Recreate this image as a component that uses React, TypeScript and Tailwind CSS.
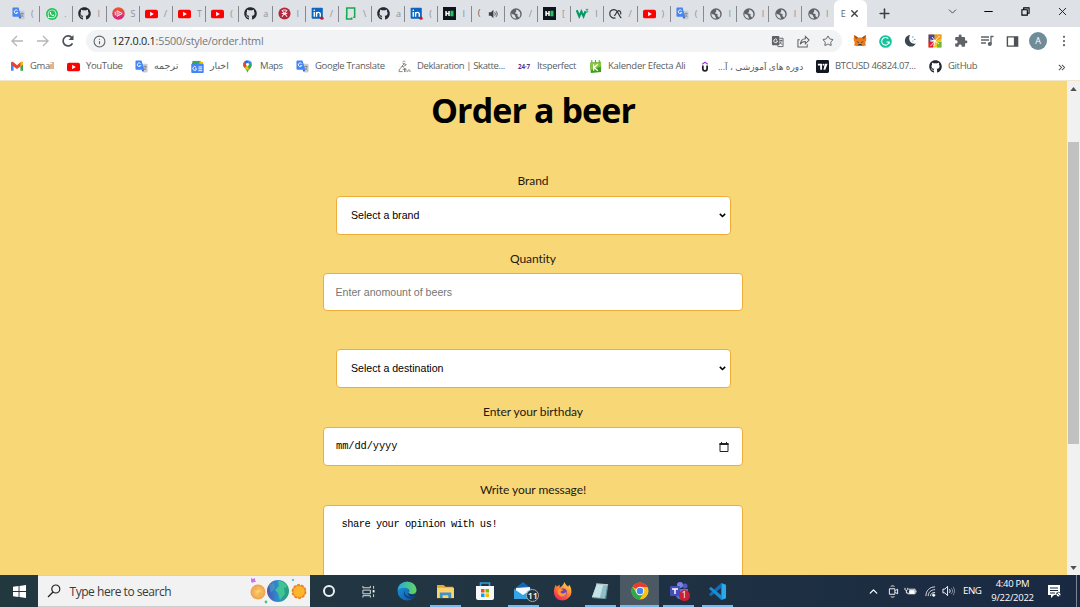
import type { ReactNode } from "react";
import { FaGithub, FaWhatsapp } from "react-icons/fa";
import { MdExtension } from "react-icons/md";
import { ChevronDown, ChevronUp, Minus, Plus, X, Star, Info } from "lucide-react";

const Translate = () => (
  <svg viewBox="0 0 14 14" className="size-[13px]">
    <path d="M6 4h6.5a1 1 0 0 1 1 1v7.5a1 1 0 0 1-1 1H9z" fill="#c9cdd2" />
    <path d="M1.5.5h5.500l3 10h-8.500a1 1 0 0 1-1-1v-8a1 1 0 0 1 1-1z" fill="#4285f4" />
    <path d="M6 3.800A2 2 0 1 0 6.300 6H4.600" fill="none" stroke="#fff" strokeWidth="1" />
    <path d="M9 7h3.500M10.800 6v1M12 7c-.5 2-1.500 3-2.500 4M9.800 8l2.500 3" fill="none" stroke="#7b828c" strokeWidth=".8" />
    <path d="M7 10.500h3L8.500 13z" fill="#2a56c6" />
  </svg>
);
const YouTube = () => (
  <svg viewBox="0 0 14 10" className="h-[10px] w-[13px]">
    <rect y=".3" width="14" height="9.400" rx="2" fill="#f00" />
    <path d="M5.500 2.700v4.600L9.500 5z" fill="#fff" />
  </svg>
);
const GitHub = () => <FaGithub className="size-[13px] text-[#24292f]" />;
const Globe = () => (
  <svg viewBox="0 0 14 14" className="size-[12px]">
    <circle cx="7" cy="7" r="6.700" fill="#5f6368" />
    <path d="M7.500 1.800c-1 2 .5 2.700-1 3.200-1 .5-.5 1.500.5 1.700 2-.2 2.500 1 1.500 2.500 1.500.5 1 1.500 2.500 1.800 2-3 1.500-7.500-3.500-9.200zM1.700 6.300c1.500 1.500 3.800 1 4.300 2.700 0 1.500 1 1.300 1 3.300-3 0-5.600-2.300-5.300-6z" fill="#dee1e6" />
  </svg>
);
const WhatsApp = () => (
  <span className="flex size-[12px] items-center justify-center rounded-full bg-[#25c25c]">
    <FaWhatsapp className="size-[10px] text-white" />
  </span>
);
const LinkedIn = () => (
  <svg viewBox="0 0 14 14" className="size-[13px]">
    <rect x=".7" y=".7" width="12" height="12" rx="1" fill="#0a66c2" />
    <path d="M3.500 5.500v5M6 10.500v-5M6 8c0-3 4-3 4 0v2.500" fill="none" stroke="#fff" strokeWidth="1.500" />
    <circle cx="3.500" cy="3.500" r=".9" fill="#fff" />
    <circle cx="11.800" cy="12" r="1.800" fill="#c5192d" />
  </svg>
);
const Hacker = () => (
  <svg viewBox="0 0 14 14" className="size-[13px]">
    <rect width="14" height="14" fill="#0e141e" />
    <path d="M3.300 4.300v5.400M6.500 4.300v5.400M3.500 7h3" stroke="#fff" strokeWidth="1.600" />
    <rect x="8" y="4" width="3.300" height="6" fill="#1fc55b" />
  </svg>
);
const Playdisc = () => (
  <svg viewBox="0 0 14 14" className="size-[13px]">
    <defs>
      <linearGradient id="disc" x1="0" y1="0" x2="0" y2="1">
        <stop stopColor="#f0592b" />
        <stop offset="1" stopColor="#d61f83" />
      </linearGradient>
    </defs>
    <circle cx="7" cy="7" r="6.700" fill="url(#disc)" />
    <path d="M3.500 5v4M5.500 4l5.500 3-5.500 3zM7.500 5.500v3" fill="none" stroke="#fff" strokeWidth=".9" />
  </svg>
);
const RedDisc = () => (
  <svg viewBox="0 0 14 14" className="size-[13px]">
    <circle cx="7" cy="7" r="6.500" fill="#b3263b" />
    <path d="m4.200 3.500 5.600 7M9.800 3.500l-5.600 7M5 3.200h4M4 7h6" fill="none" stroke="#f8e9eb" strokeWidth="1.200" />
  </svg>
);
const GreenDoc = () => (
  <svg viewBox="0 0 14 14" className="size-[13px]">
    <path d="M3 10V1.200h8.500v9.800H10M2.800 9v3.800h5.500v-1.500" fill="none" stroke="#14a94c" strokeWidth="1.600" />
  </svg>
);
const W3 = () => (
  <svg viewBox="0 0 14 14" className="size-[13px]">
    <path d="M.8 3.500 3.500 10l2.300-5 2.300 5 2.200-5.500" fill="none" stroke="#059862" strokeWidth="2.300" />
    <path d="M10.500 2.500h2.300l-1.200 1.400c1.800 0 1.500 2.400-.8 1.800" fill="none" stroke="#059862" strokeWidth=".9" />
  </svg>
);
const Loop = () => (
  <svg viewBox="0 0 14 14" className="size-[13px]" fill="none" stroke="#33373b" strokeWidth="1.300">
    <path d="M7 11.500C4 13 .8 10.500.8 7S4.500 2 7.500 3.500c2.500 1.500 3 6 5.700 8.500" />
    <path d="M5.500 9.500C8 8 8 4 10.500 3.800c2 .2 2.500 2.700 2 4.200" />
  </svg>
);
const Speaker = () => (
  <svg viewBox="0 0 12 12" className="size-[10px]">
    <path d="M1 4h2.500L6.500 1v10l-3-3H1z" fill="#3c4043" />
    <path d="M8 4c1 1 1 3 0 4M9.500 2.500c2 2 2 5 0 7" fill="none" stroke="#3c4043" />
  </svg>
);

const tabs: [ReactNode, string][] = [
  [<Translate />, "("], [<WhatsApp />, "."], [<GitHub />, "I"], [<Playdisc />, "S"], [<YouTube />, "/"],
  [<YouTube />, "T"], [<YouTube />, "("], [<GitHub />, "a"], [<RedDisc />, "I"], [<LinkedIn />, "/"],
  [<GreenDoc />, "\\"], [<GitHub />, "a"], [<LinkedIn />, "("], [<Hacker />, "I"], [null, ""],
  [<Globe />, "/"], [<Hacker />, "["], [<W3 />, "I"], [<Loop />, "/"], [<YouTube />, ")"], [<Translate />, "("],
  [<Globe />, "I"], [<Globe />, "I"], [<Globe />, "I"], [<Globe />, "I"],
];

function TabStrip() {
  return (
    <div className="flex h-[27px] bg-[#dee1e6] pl-[7px]">
      {tabs.map(([icon, letter], i) => (
        <div key={i} className={`flex h-[27px] shrink-0 items-center ${i < 22 ? "w-[33.2px]" : "w-[32.200px]"}`}>
          {icon ? (
            <>
              <span className={`flex w-[14px] justify-center ${i > 20 ? "ml-[5px]" : "ml-[4.500px]"}`}>{icon}</span>
              <span className="ml-[5.500px] text-[9px] text-[#8f9296]">{letter}</span>
            </>
          ) : (
            <>
              <span className="ml-[6px] text-[9.5px] text-[#5f6368]">(</span>
              <span className="ml-[8px]"><Speaker /></span>
            </>
          )}
          {i < 24 && <span className="ml-auto h-[16px] w-px bg-[#868a8f]" />}
        </div>
      ))}
      <div className="flex w-[33.500px] shrink-0 items-center rounded-t-[6px] bg-white pl-[7px]">
        <span className="text-[9px] text-[#66696d]">E</span>
        <X className="ml-[3px] size-[11px] text-[#3c4043]" strokeWidth={3} />
      </div>
      <Plus className="mt-[6px] ml-[10px] size-[15px] text-[#3c4043]" strokeWidth={2.500} />
      <ChevronDown className="mt-[5px] ml-[54px] size-[13px] text-[#4a4d51]" strokeWidth={1.800} />
      <Minus className="mt-[5px] ml-[23px] size-[13px] text-black" strokeWidth={2} />
      <svg viewBox="0 0 10 10" className="mt-[7px] ml-[26px] size-[9px]" fill="none" stroke="#000" strokeWidth="1.200">
        <path d="M1 3h6v6H1zM3 3V1h6v6H7" />
      </svg>
      <X className="mt-[5px] ml-[26px] size-[13px] text-[#222]" strokeWidth={1.800} />
    </div>
  );
}

function Toolbar() {
  return (
    <div className="flex h-[27px] items-center pt-[1px]">
      <svg viewBox="0 0 60 14" className="ml-[10px] h-[14px] w-[60px]" fill="none" strokeWidth="1.400">
        <path d="M13 7H2.500M7 2 2 7l5 5M27 7h10.500M33 2l5 5-5 5" stroke="#b5b7ba" />
      </svg>
      <svg viewBox="0 0 14 14" className="-ml-[9px] size-[14px]" fill="none" stroke="#4d5156" strokeWidth="1.700">
        <path d="M11.500 9.300A5 5 0 1 1 11 3.800" />
        <path d="M12.500 1v5h-5z" fill="#4d5156" stroke="none" />
      </svg>
      <div className="ml-[11px] flex h-[22px] w-[756px] items-center rounded-full bg-[#f1f3f4] pl-[7px]">
        <Info className="size-[13px] text-[#5f6368]" strokeWidth={2} />
        <span className="ml-[6px] text-[10.800px] tracking-[-0.220px] text-[#75787c]">
          <span className="text-[#202124]">127.0.0.1</span>:5500/style/order.html
        </span>
        <svg viewBox="0 0 14 14" className="mr-[13px] ml-auto size-[13px]">
          <rect x="1" y="1" width="8" height="10" rx="1" fill="#5f6368" />
          <path d="M6.500 5A2 2 0 1 0 7 6.500H5.200" fill="none" stroke="#f1f3f4" />
          <path d="M9 3.500h4v9H7.500L7 11M9 6h3.500M11 5v1c0 2-1 3-2 4M9.500 7.500l2.500 3" fill="none" stroke="#5f6368" />
        </svg>
        <svg viewBox="0 0 14 14" className="mr-[12px] size-[13px]" fill="none" stroke="#5f6368" strokeWidth="1.100">
          <path d="M3 5H1v8h10v-3M9 1.500 13 5.500l-4 4V7C6 7 4.500 8 3.500 10 4 6.500 6 4 9 4z" />
        </svg>
        <Star className="mr-[8px] size-[12px] text-[#5f6368]" strokeWidth={2} />
      </div>
      <svg viewBox="0 0 14 14" className="ml-[11px] size-[14px]">
        <path d="m1 1 4 2.500h4L13 1l.3 5-1 2.500.5 3-3 .8L8 11.500H6l-1.800.8-3-.8.5-3-1-2.500z" fill="#ea7e1e" />
        <path d="m1 1 4 2.500L3 5.500zM13 1 9 3.500l2 2z" fill="#a94d18" />
        <path d="m3 7.500 2.500.3.5 1.200zM11 7.500l-2.500.3L8 9zM5.500 10h3l.4 1.500H5z" fill="#363636" />
      </svg>
      <svg viewBox="0 0 14 14" className="ml-[12px] size-[13px]">
        <circle cx="7" cy="7" r="6.800" fill="#15c39a" />
        <path d="M10 4A4.100 4.100 0 1 0 11 7.500H8M11 7.500v2" fill="none" stroke="#fff" strokeWidth="1.200" />
      </svg>
      <svg viewBox="0 0 14 14" className="ml-[11px] size-[14px]">
        <path d="M7 1a5.800 5.800 0 1 0 5.800 8.500C8 11 4.500 6 7 1z" fill="#3c4650" />
        <path d="M9 3h1.500M11 5.500h1.500M9.500 7h1" stroke="#4aa5d8" />
      </svg>
      <svg viewBox="0 0 14 14" className="ml-[11px] size-[14px]">
        <path d="M.5.500h13v13H.5z" fill="#f4c51c" />
        <path d="M.5.500h6v5l-6 3z" fill="#4f4596" />
        <path d="M7 .5h6.500v4L7 7z" fill="#ed9a29" />
        <path d="M.5 8h5.500l-1 5.500H.5z" fill="#dc2140" />
        <path d="M9 8h4.500v5.500H9z" fill="#76b73a" />
        <path d="m2.500 12 9-10M4 3l3 4 4 3M7 7l-1 5M2 6l5 1" stroke="#fff" fill="none" strokeWidth=".9" />
      </svg>
      <MdExtension className="ml-[12px] size-[14px] text-[#5f6368]" />
      <svg viewBox="0 0 14 14" className="ml-[12px] size-[14px]" fill="none" stroke="#5f6368" strokeWidth="1.300">
        <path d="M1 3h8M1 6h8M1 9h5M11 10V2.500h2.500" />
        <circle cx="9.800" cy="10" r="1.400" fill="#5f6368" />
      </svg>
      <svg viewBox="0 0 14 14" className="ml-[12px] size-[13px]">
        <path d="M1.500 2h11v10h-11z" fill="none" stroke="#4d5156" strokeWidth="1.500" />
        <path d="M8.500 2h4v10h-4z" fill="#4d5156" />
      </svg>
      <span className="ml-[10px] flex size-[18px] items-center justify-center rounded-full bg-[#718c99] text-[9px] text-white">A</span>
      <svg viewBox="0 0 4 14" className="ml-[15px] h-[13px] w-[4px]" fill="#5f6368">
        <circle cx="2" cy="2" r="1.200" /><circle cx="2" cy="6.500" r="1.200" /><circle cx="2" cy="11" r="1.200" />
      </svg>
    </div>
  );
}

function Bookmark({ icon, text, box, spacing = "tracking-[-0.150px]" }: { icon: ReactNode; text: string; box: string; spacing?: string }) {
  return (
    <div className={`flex shrink-0 items-center ${box}`}>
      <span className="flex w-[14px] shrink-0 justify-center">{icon}</span>
      <span className={`ml-[6px] text-[9.500px] whitespace-nowrap text-[#5a5d61] ${spacing}`}>{text}</span>
    </div>
  );
}

function Bookmarks() {
  return (
    <div className="flex h-[27px] items-center border-b border-[#f0e6cc] pb-px pl-[10px]">
      <Bookmark box="w-[56px]" text="Gmail" spacing="tracking-[-0.400px]" icon={
        <svg viewBox="0 0 14 12" className="h-[11px] w-[12px]">
          <path d="M0 2v9h3V5z" fill="#4285f4" />
          <path d="M14 2v9h-3V5z" fill="#34a853" />
          <path d="M0 2c0-2 2-2 3-1l4 3.500L11 1c1-1 3-1 3 1v2L7 9 0 4z" fill="#ea4335" />
          <path d="M11 1c1-1 3-1 3 1v2l-3 2z" fill="#fbbc04" />
        </svg>} />
      <Bookmark box="w-[68px]" text="YouTube" spacing="tracking-[-0.350px]" icon={<YouTube />} />
      <Bookmark box="w-[56px]" text="ترجمه" spacing="tracking-normal" icon={<Translate />} />
      <Bookmark box="w-[50px]" text="اخبار" spacing="tracking-normal" icon={
        <svg viewBox="0 0 14 14" className="size-[13px]">
          <path d="M1 3h12v5H1z" fill="#d93b30" /><path d="M1.500 1h9v5h-9z" fill="#34a853" /><path d="M9 2h4v4H9z" fill="#fbbc04" />
          <rect x=".3" y="4" width="13.400" height="10" rx="1" fill="#4285f4" />
          <path d="M5.500 7.800a2 2 0 1 0 .5 1.700H4.500M8 7.500h4M8 9.500h4M8 11.500h4" fill="none" stroke="#fff" />
        </svg>} />
      <Bookmark box="w-[55px]" text="Maps" spacing="tracking-[-0.400px]" icon={
        <svg viewBox="0 0 14 14" className="size-[13px]">
          <path d="M7 14C6.500 10 2.500 8.500 2.500 5h9C11.500 8.500 7.500 10 7 14z" fill="#34a853" />
          <path d="M2.500 5A4.500 4.500 0 0 1 7 .3L9 4 3.500 8z" fill="#1a73e8" />
          <path d="M3.300 2.200 7 5 4 8.500C2 6 2 4 3.300 2.200z" fill="#ea4335" />
          <path d="m4 8.500 3-3.500 4 3-2 2.300-3 .5z" fill="#fbbc04" />
          <path d="m7 5 4-3c1 2 .8 4-.5 6l-2 2z" fill="#34a853" />
          <path d="M7 .3c2 0 3.500 1 4.200 2.500L9 6z" fill="#4285f4" />
          <circle cx="7" cy="4.800" r="1.600" fill="#fff" />
        </svg>} />
      <Bookmark box="w-[102px]" text="Google Translate" spacing="tracking-[-0.320px]" icon={<Translate />} />
      <Bookmark box="w-[120px]" text="Deklaration | Skatte..." spacing="tracking-[-0.380px]" icon={
        <svg viewBox="0 0 14 14" className="size-[13px]" fill="none" stroke="#77756d" strokeWidth=".9">
          <path d="M5 2c1-1 2-1 3 0M5 3.500l4 1.500-3 2H4l3-3.500M4 7c-1 2-3 3-3 5.500h4M6 8l2 2H5M7 13V9.500h1.500V13M10.500 13c0-3.500 2.500-3.500 2.500 0" />
        </svg>} />
      <Bookmark box="w-[71px]" text="Itsperfect" spacing="tracking-[-0.300px]" icon={<b className="text-[6.300px] tracking-[-0.200px] text-[#62317c]">24·7</b>} />
      <Bookmark box="w-[110px]" text="Kalender Efecta Ali" spacing="tracking-[-0.260px]" icon={
        <svg viewBox="0 0 14 14" className="size-[13px]">
          <path d="m1 3 12-1v11L2 14z" fill="#3f9b1d" /><path d="m1 3 12-1v5L1.500 11z" fill="#86c740" />
          <path d="M3 0v3M7 0v3M11 0v3" stroke="#6a8a3f" />
          <path d="M5 4.500v7M9.500 4.500 5.500 8l4 3.500" fill="none" stroke="#fff" strokeWidth="1.400" />
        </svg>} />
      <div className="flex w-[117px] shrink-0 items-center">
        <svg viewBox="0 0 14 14" className="size-[13px]" fill="none">
          <path d="m4.500 4.500 3-2 3 2" stroke="#a435f0" strokeWidth="1.300" />
          <path d="M5.200 6v3.500c0 3 4.600 3 4.600 0V6" stroke="#222" strokeWidth="1.900" />
        </svg>
        <span dir="rtl" className="ml-[7px] text-[9px] tracking-[-0.200px] whitespace-nowrap text-[#5a5d61]">دوره های آموزشی ، آ...</span>
      </div>
      <Bookmark box="w-[113px]" text="BTCUSD 46824.07..." spacing="tracking-[-0.350px]" icon={
        <svg viewBox="0 0 14 14" className="size-[13px]">
          <rect width="14" height="14" rx="1.500" fill="#131722" />
          <path d="M2 4h4.500v6.500h-2V6H2zM9.500 4h3L10 10.500H8z" fill="#fff" /><circle cx="8" cy="5" r="1" fill="#fff" />
        </svg>} />
      <Bookmark box="w-[129px]" text="GitHub" spacing="tracking-[-0.350px]" icon={<GitHub />} />
      <svg viewBox="0 0 8 8" className="mt-px ml-[1px] size-[7px]" fill="none" stroke="#4d5156" strokeWidth="1.200"><path d="m1 1 3 3-3 3M4.500 1l3 3-3 3" /></svg>
    </div>
  );
}

const field = "shrink-0 rounded-[4px] border border-[#f0ad38] bg-white";
const caption = "h-[18px] shrink-0 font-[Lato,sans-serif] text-[12px] leading-[18px] tracking-[-0.070px] text-[#1d1a10]";
const arrow = (
  <svg viewBox="0 0 8 6" className="h-[5px] w-[7px]" fill="none" stroke="#000" strokeWidth="1.900"><path d="m.8 1 3.200 3.200L7.200 1" /></svg>
);

function Dropdown({ text, margin }: { text: string; margin: string }) {
  return (
    <div className={`flex h-[39px] w-[395px] items-center justify-between pr-[3.500px] pl-[14.500px] font-['Liberation_Sans',sans-serif] text-[10.600px] text-black ${field} ${margin}`}>
      <span>{text}</span>
      {arrow}
    </div>
  );
}

function Page() {
  return (
    <div className="flex h-[494px] overflow-hidden bg-[#f8d777]">
      <div className="flex w-[1067px] flex-col items-center pr-px">
        <h1 className="mt-[7px] h-[44px] shrink-0 text-[34px] leading-[44px] font-bold tracking-[-0.900px] text-black">Order a beer</h1>
        <label className={`mt-[40px] ${caption}`}>Brand</label>
        <Dropdown text="Select a brand" margin="mt-[6px]" />
        <label className={`mt-[15px] ${caption}`}>Quantity</label>
        <input placeholder="Enter anomount of beers" className={`mt-[5px] h-[38px] w-[420px] px-[11.500px] font-['Liberation_Sans',sans-serif] text-[10.600px] placeholder:text-[#757575] ${field}`} />
        <Dropdown text="Select a destination" margin="mt-[38px]" />
        <label className={`mt-[15px] ${caption}`}>Enter your birthday</label>
        <div className={`mt-[6px] flex h-[39px] w-[420px] items-center justify-between pr-[13.500px] pl-[12px] ${field}`}>
          <span className="font-['Liberation_Mono',monospace] text-[10.400px] tracking-[-0.100px] text-black">mm/dd/yyyy</span>
          <svg viewBox="0 0 10 10" className="size-[10px]">
            <path d="M1 1.500h8v8H1z" fill="none" stroke="#222" /><path d="M.5 1h9v2h-9z" fill="#222" /><path d="M2 0h1v2H2zM7 0h1v2H7z" fill="#222" />
          </svg>
        </div>
        <label className={`mt-[15px] ${caption}`}>Write your message!</label>
        <textarea defaultValue="share your opinion with us!" className={`mt-[6px] h-[120px] w-[420px] resize-none px-[17.500px] py-[11px] font-['Liberation_Mono',monospace] text-[10.400px] tracking-[-0.470px] text-black ${field}`} />
      </div>
      <div className="flex w-[13px] flex-col items-center bg-[#f1f1f1]">
        <svg viewBox="0 0 8 5" className="mt-[6px] h-[4px] w-[7px]"><path d="M0 5 4 0l4 5z" fill="#505050" /></svg>
        <div className="mt-[51px] h-[302px] w-[11px] bg-[#c1c1c1]" />
        <svg viewBox="0 0 8 5" className="mt-auto mb-[5px] h-[4px] w-[7px]"><path d="M0 0h8L4 5z" fill="#505050" /></svg>
      </div>
    </div>
  );
}

function Slot({ children, running, active }: { children: ReactNode; running?: boolean; active?: boolean }) {
  return (
    <div className={`flex h-[32px] w-[38.800px] shrink-0 flex-col items-center ${active ? "bg-[#4b5964]" : ""}`}>
      <div className="flex h-[30px] items-center pt-[2px]">{children}</div>
      {running && <div className={`h-[2px] bg-[#76b9ed] ${active ? "w-full" : "w-[31px]"}`} />}
    </div>
  );
}

function Taskbar() {
  return (
    <div className="flex h-[32px] bg-linear-to-r from-[#22383f] via-[#203442] to-[#1a2942] text-white">
      <div className="flex w-[38px] shrink-0 items-center justify-center">
        <svg viewBox="0 0 14 14" className="size-[13px]" fill="#fff"><path d="M0 2l6-.9v5.400H0zM7 1l7-1v6.500H7zM0 7.500h6v5.400L0 12zM7 7.500h7V14l-7-1z" /></svg>
      </div>
      <div className="flex w-[272px] shrink-0 items-center border-y border-[#cfcfcf] bg-[#f2f2f2]">
        <svg viewBox="0 0 14 14" className="ml-[9px] size-[14px]" fill="none" stroke="#222" strokeWidth="1.200"><circle cx="8.800" cy="5" r="4" /><path d="M6 8 1 13" /></svg>
        <span className="ml-[8.500px] pt-px text-[12px] tracking-[-0.460px] whitespace-nowrap text-[#3a3a3a]">Type here to search</span>
        <svg viewBox="0 0 60 28" className="mr-[1px] ml-auto h-[28px] w-[60px]">
          <defs>
            <radialGradient id="moon"><stop stopColor="#ffd66e" /><stop offset="1" stopColor="#ee9e4e" /></radialGradient>
            <linearGradient id="earth"><stop stopColor="#4d52ad" /><stop offset=".5" stopColor="#2c8fd3" /><stop offset="1" stopColor="#24a66c" /></linearGradient>
          </defs>
          <circle cx="9" cy="15" r="7.500" fill="url(#moon)" />
          <circle cx="7" cy="12" r="1.500" fill="#f0b258" /><circle cx="11" cy="17" r="1.800" fill="#f0b258" />
          <circle cx="29" cy="14" r="11" fill="url(#earth)" />
          <path d="M29 4c5 0 8 3 9 6l-3 1 1 6-5 6-2-7-3-3 4-4z" fill="#45cf88" opacity=".8" /><path d="m20 8 5-3 1 6-4 5z" fill="#4aafc4" opacity=".5" />
          <circle cx="50" cy="14.500" r="6.800" fill="#f59a26" />
          <circle cx="50" cy="14.500" r="6.700" fill="none" stroke="#ee791f" strokeWidth="1.400" strokeDasharray="2.800 1.400" />
          <circle cx="50" cy="14.500" r="5.300" fill="#fdb62c" />
          <path d="m2 1 2 1 2-1 0 2 1 2-2 0-2 1-1-2z" fill="#c874ed" />
          <circle cx="44" cy="3" r="1.200" fill="#61c5dd" /><circle cx="17" cy="25" r="1.400" fill="#42ca79" />
        </svg>
      </div>
      <Slot><span className="size-[12px] rounded-full border-2 border-[#eef1f2]" /></Slot>
      <Slot>
        <svg viewBox="0 0 14 14" className="size-[13px]" fill="none" stroke="#e4e9eb"><path d="M1 1v2h8V1M1 5.500h8v4H1zM1 13.500v-2h8v2M12.500 1v3M12.500 10v3" /><path d="M11.500 5.500h2v2.500h-2z" fill="#fff" stroke="none" /></svg>
      </Slot>
      <Slot>
        <svg viewBox="0 0 20 20" className="size-[20px]">
          <defs>
            <linearGradient id="wave" x1="0" x2="1"><stop stopColor="#28a7df" /><stop offset="1" stopColor="#63d758" /></linearGradient>
            <linearGradient id="base" x1="0" y1="0" x2="1" y2="1"><stop stopColor="#1b9bdf" /><stop offset="1" stopColor="#0c4fa0" /></linearGradient>
          </defs>
          <circle cx="10" cy="10" r="9.500" fill="url(#base)" />
          <path d="M.6 9C2-2 19-2 19.500 9c0 4-5 5-8 3 4-4-4-8-10.900-3z" fill="url(#wave)" />
          <path d="M8 9c-2 5 4 9 10 5-1 2-2 3-4 4-6-1-9-5-6-9z" fill="#123f82" />
          <path d="M11.500 12c2 2 6 2 8.500 0l-1.500 3c-4 1.500-8 0-7-3z" fill="#20353f" />
        </svg>
      </Slot>
      <Slot running>
        <svg viewBox="0 0 20 18" className="h-[17px] w-[19px]">
          <path d="M1 2h7l2 2h8v12H1z" fill="#e5a834" /><path d="M1 5h18v11H1z" fill="#fbd467" />
          <path d="M4 16v-6h12v6h-3v-3H7v3z" fill="#3e91d1" />
        </svg>
      </Slot>
      <Slot>
        <svg viewBox="0 0 20 20" className="size-[20px]">
          <path d="M5.500 6V2h9v4" fill="none" stroke="#2f9fe0" strokeWidth="1.600" /><path d="M1 5h18v12a2 2 0 0 1-2 2H3a2 2 0 0 1-2-2z" fill="#f7f8fa" />
          <path d="M6 8h3.500v3.500H6z" fill="#f25022" /><path d="M10.500 8H14v3.500h-3.500z" fill="#7fba00" /><path d="M6 12.500h3.500V16H6z" fill="#00a4ef" /><path d="M10.500 12.500H14V16h-3.500z" fill="#ffb900" />
        </svg>
      </Slot>
      <Slot running>
        <div className="relative">
          <svg viewBox="0 0 20 20" className="size-[20px]"><path d="m1 8 9-7 9 7v9H1z" fill="#1266b4" /><path d="m3 7 14-1v6l-7 3-7-3z" fill="#f4f8fc" /><path d="m1 8 9 6 9-6v10H1z" fill="#35a4e7" /></svg>
          <span className="absolute top-[8px] left-[13px] flex size-[13px] items-center justify-center rounded-full border border-[#a4abb0] bg-[#26333c] text-[9px] font-semibold">11</span>
        </div>
      </Slot>
      <Slot>
        <svg viewBox="0 0 20 20" className="size-[19px]">
          <defs><linearGradient id="fox" x1=".8" y1="0" x2=".2" y2="1"><stop stopColor="#ffdf3f" /><stop offset=".5" stopColor="#ff7b2e" /><stop offset="1" stopColor="#ef1c61" /></linearGradient></defs>
          <path d="M12 0c1 3 3 4 4 5l1-2c3 4 3 9 1 12-5 7-17 6-17-5 0-3 1-5 2-7l1 2 3-2v3C9 5 11 3 12 0z" fill="url(#fox)" />
          <circle cx="10.500" cy="11" r="4.200" fill="#7140c7" /><path d="M5 8c3-2 5 0 6 1-2 0-3 1-3 2 2 2 5 1 6-1 1 4-3 6-6 5S4 11 5 8z" fill="#ff9634" />
        </svg>
      </Slot>
      <Slot running>
        <svg viewBox="0 0 20 20" className="size-[19px]"><path d="m6 2 12 1-3 15-14-2z" fill="#8fc0ca" /><path d="m6 2 7 .7L9 17l-8-1z" fill="#c5e2e7" /><path d="m17 3 1 1-2 14-14-1v-1l13 1z" fill="#5d888f" /><path d="m5.500 2 12.500 1" stroke="#c4cbcc" strokeWidth="1.500" /></svg>
      </Slot>
      <Slot running active>
        <svg viewBox="0 0 20 20" className="size-[18px]">
          <circle cx="10" cy="10" r="9.500" fill="#fbc116" /><path d="M10 10 1.800 5.200A9.500 9.500 0 0 1 18.300 5.500H10z" fill="#e63b2e" />
          <path d="M1.800 5.200A9.500 9.500 0 0 0 9.500 19.500L14 12 6 12z" fill="#2da94f" /><circle cx="10" cy="10" r="4.700" fill="#fff" /><circle cx="10" cy="10" r="3.600" fill="#4285f4" />
        </svg>
      </Slot>
      <Slot running>
        <div className="relative">
          <svg viewBox="0 0 20 20" className="size-[20px]"><circle cx="16" cy="5" r="2.500" fill="#5059c9" /><circle cx="11" cy="4" r="3" fill="#7b83eb" /><path d="M6 8h13v6c0 6-12 6-12 0z" fill="#656dd7" /><rect x="1" y="5" width="10" height="10" rx="1" fill="#464eb8" /><path d="M3 8h6M6 8v5" stroke="#fff" strokeWidth="1.500" /></svg>
          <span className="absolute top-[9px] left-[10px] flex size-[11px] items-center justify-center rounded-full bg-[#c9203a] text-[8.500px]">1</span>
        </div>
      </Slot>
      <Slot running>
        <svg viewBox="0 0 20 20" className="size-[19px]"><path d="m14 1 5 2v14l-5 2z" fill="#2aa9ec" /><path d="M14 1v5L3 15l-2-2z" fill="#0b6fbd" /><path d="M14 19v-5L3 5 1 7z" fill="#188bd2" /></svg>
      </Slot>
      <div className="ml-auto flex shrink-0 items-center">
        <ChevronUp className="size-[13px]" strokeWidth={2.300} />
        <svg viewBox="0 0 12 14" className="ml-[8px] h-[13px] w-[11px]" fill="none" stroke="#fff"><path d="M1.500 4h6v6h-6zM8 6l2.500-1.500v5L8 8M3 1.500c1-.8 3-.8 4 0M3 12.500c1 .8 3 .8 4 0" /></svg>
        <svg viewBox="0 0 14 12" className="ml-[5px] h-[11px] w-[13px]" fill="none" stroke="#fff"><path d="M5 3.500h7v5H4V7" /><path d="M6 5h5v3H6zM13 5v2" fill="#fff" /><path d="M1 2v2c0 1 3 1 3 0V2M2.500 5v3" /></svg>
        <svg viewBox="0 0 12 12" className="ml-[8px] size-[11px]" fill="none" stroke="#e6e9ed"><path d="M1 11C1 5 5 1 11 1M3.500 11c0-4 3-7 7.500-7M6 11c0-2.500 2-4 5-4" /><circle cx="9.500" cy="10" r="1.300" fill="#fff" /></svg>
        <svg viewBox="0 0 14 12" className="ml-[6px] h-[12px] w-[13px]" fill="none" stroke="#fff"><path d="M1 4h2l3-3v10L3 8H1z" /><path d="M8 4c1 1 1 3 0 4" /><path d="M10 3c2 2 2 4 0 6M12 1.500c2 3 2 6 0 9" stroke="#8993a1" /></svg>
        <span className="ml-[8px] w-[19px] text-[9.800px] tracking-[-0.500px]">ENG</span>
        <div className="ml-[9px] w-[43px] text-center text-[9.500px] leading-[14px] tracking-[-0.280px] whitespace-nowrap">
          <div>4:40 PM</div>
          <div>9/22/2022</div>
        </div>
        <svg viewBox="0 0 14 14" className="ml-[13px] size-[14px]"><path d="M1 1h12v10H7l-3 3v-3H1z" fill="#fff" /><path d="M3 4h8M3 6.500h8M3 9h5" stroke="#1b2a41" /><circle cx="11.500" cy="10.500" r="2.300" fill="#fff" stroke="#1b2a41" strokeWidth=".7" /><path d="m10 9 3 3" stroke="#1b2a41" strokeWidth=".7" /></svg>
        <div className="mr-[3px] ml-[15px] h-[32px] w-px bg-[#7b8594]" />
      </div>
    </div>
  );
}

export default function App() {
  return (
    <div className="h-[607px] w-[1080px] overflow-hidden bg-white font-['Open_Sans','DejaVu_Sans',sans-serif]">
      <TabStrip />
      <Toolbar />
      <Bookmarks />
      <Page />
      <Taskbar />
    </div>
  );
}
